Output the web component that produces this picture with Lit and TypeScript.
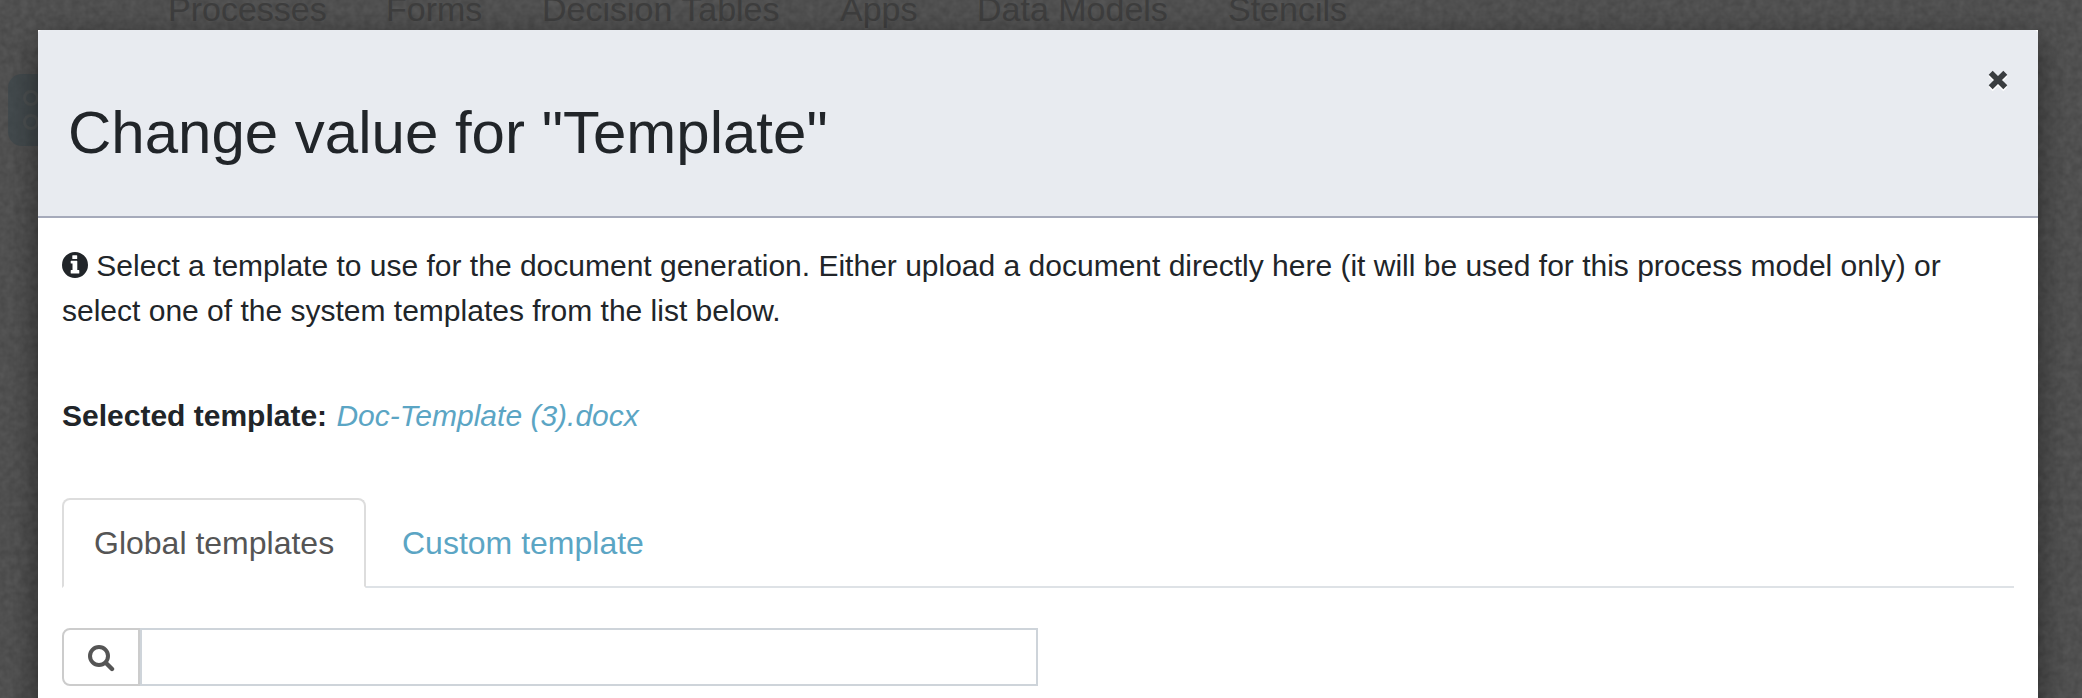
import { LitElement, html, css } from "lit";
import { customElement, property } from "lit/decorators.js";

const NAV = ["Processes", "Forms", "Decision Tables", "Apps", "Data Models", "Stencils"];

@customElement("app-backdrop")
class AppBackdrop extends LitElement {
  static styles = css`
    :host { display: block; height: 698px; overflow: hidden; background: #505050; font-family: "Liberation Sans", Arial, sans-serif; }
    .page { position: relative; height: 698px; }
    .weave { position: absolute; inset: 0; width: 100%; height: 100%; }
    .nav { position: relative; display: grid; grid-template-columns: 218px 156px 298px 137px 251px auto; padding-left: 168px; height: 62px; }
    .item { font-size: 34px; line-height: 40px; margin-top: -11px; color: #3e3e3e; white-space: nowrap; }
    .tool { position: relative; display: block; margin: 12px 0 0 8px; width: 72px; height: 72px; border-radius: 14px; background: rgba(60, 70, 76, 0.65); }
    .tool svg { display: block; }
  `;
  render() {
    return html`<div class="page">
      <svg class="weave">
        <filter id="cloth" x="0" y="0" width="100%" height="100%" color-interpolation-filters="sRGB">
          <feTurbulence type="fractalNoise" baseFrequency="0.14" numOctaves="2" seed="4" />
          <feColorMatrix values="0.08 0 0 0 0.275  0.08 0 0 0 0.275  0.08 0 0 0 0.275  0 0 0 0 1" />
        </filter>
        <rect width="100%" height="100%" filter="url(#cloth)" />
      </svg>
      <nav class="nav">${NAV.map((n) => html`<span class="item">${n}</span>`)}</nav>
      <span class="tool">
        <svg width="72" height="72" viewBox="0 0 72 72" fill="none" stroke="#4c5051" stroke-width="3">
          <circle cx="23" cy="24" r="6.5" /><circle cx="23" cy="48" r="6.5" />
        </svg>
      </span>
    </div>`;
  }
}

@customElement("app-icon")
class AppIcon extends LitElement {
  @property() name = "";
  static styles = css`
    :host { display: inline-block; line-height: 0; }
    .close { filter: drop-shadow(0 2px 0 #fff); }
  `;
  render() {
    if (this.name === "info")
      return html`<svg width="26" height="26" viewBox="0 0 26 26" fill="currentColor">
        <path fill-rule="evenodd" d="M13 0a13 13 0 1 1 0 26a13 13 0 1 1 0-26zM10.8 3.2q-.5 0-.5.5v2.7q0 .5.5.5h3.9q.5 0 .5-.5V3.7q0-.5-.5-.5zM9.200 8.700q-.5 0-.5.5v1.900q0 .5.5.5h1.300v6.400H9.200q-.5 0-.5.5v2.400q0 .5.5.5h7.600q.5 0 .5-.5v-2.400q0-.5-.5-.5h-1.500V9.200q0-.5-.5-.5z" />
      </svg>`;
    if (this.name === "close")
      return html`<svg class="close" width="20" height="20" viewBox="0 0 20 20">
        <path d="M2.700 2.700L17.300 17.300M17.300 2.700L2.700 17.300" stroke="currentColor" stroke-width="5.600" />
      </svg>`;
    return html`<svg width="27" height="27" viewBox="0 0 27 27" fill="none" stroke="currentColor">
      <circle cx="11" cy="11" r="9" stroke-width="4" />
      <path d="M18 18L24 24" stroke-width="4.400" stroke-linecap="round" />
    </svg>`;
  }
}

@customElement("app-root")
class AppRoot extends LitElement {
  static styles = css`
    :host { display: block; position: relative; height: 698px; overflow: hidden; font-family: "Liberation Sans", Arial, sans-serif; color: #212529; }
    .modal { position: absolute; top: 30px; left: 38px; width: 2000px; height: 760px; background: #fff; box-shadow: 0 10px 30px rgba(0, 0, 0, 0.5); }
    .header { box-sizing: border-box; height: 188px; display: flex; justify-content: space-between; background: #e8ebf0; border-bottom: 2px solid #a5aaba; padding: 40px 30px 0 30px; border-radius: 4px 4px 0 0; }
    .title { margin: 30px 0 0; font-size: 60px; line-height: 66px; font-weight: 400; white-space: nowrap; }
    .close { color: #3a3d40; height: 20px; }
    .body { padding: 25px 24px 0; }
    .intro { margin: 0; font-size: 30px; line-height: 45px; white-space: nowrap; }
    .intro app-icon { vertical-align: -2px; }
    .selected { margin: 60px 0 0; font-size: 30px; line-height: 45px; white-space: nowrap; }
    .file { color: #5ba5c4; font-style: italic; margin-left: 1px; }
    .tabs { display: flex; box-sizing: border-box; height: 90px; margin-top: 60px; border-bottom: 2px solid #dee2e6; }
    .tab { box-sizing: border-box; height: 90px; font-size: 32px; line-height: 46px; padding: 20px 30px; border: 2px solid transparent; border-radius: 8px 8px 0 0; color: #5ba5c4; white-space: nowrap; }
    .active { width: 304px; margin-right: 4px; color: #555; background: #fff; border-color: #ddd; border-bottom-color: #fff; }
    .search { display: flex; width: 976px; height: 58px; margin-top: 40px; }
    .addon { box-sizing: border-box; width: 78px; border: 2px solid #ccc; border-radius: 8px 0 0 8px; color: #555; padding: 15px 0 0 24px; }
    .input { box-sizing: border-box; flex: 1; min-width: 0; border: 2px solid #ced4da; border-radius: 0; background: #fff; outline: none; padding: 0 16px; font-size: 28px; }
  `;
  render() {
    return html`
      <app-backdrop></app-backdrop>
      <section class="modal">
        <header class="header">
          <h2 class="title">Change value for "Template"</h2>
          <app-icon class="close" name="close"></app-icon>
        </header>
        <div class="body">
          <p class="intro"><app-icon name="info"></app-icon> Select a template to use for the document generation. Either upload a document directly here (it will be used for this process model only) or<br />select one of the system templates from the list below.</p>
          <p class="selected"><b>Selected template:</b> <span class="file">Doc-Template (3).docx</span></p>
          <div class="tabs">
            <span class="tab active">Global templates</span>
            <span class="tab">Custom template</span>
          </div>
          <div class="search">
            <span class="addon"><app-icon name="search"></app-icon></span>
            <input class="input" />
          </div>
        </div>
      </section>`;
  }
}
